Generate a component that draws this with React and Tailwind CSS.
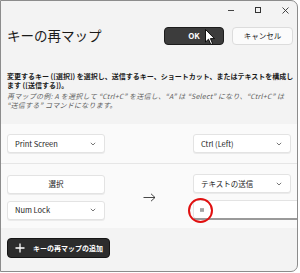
import React from "react";

const F = "font-['Noto_Sans_CJK_JP','Noto_Sans',sans-serif]";

function Chevron() {
  return (
    <svg width="6" height="4" viewBox="0 0 6 4" className="shrink-0">
      <path d="M0.8 0.8 L3 3 L5.2 0.8" fill="none" stroke="#555" strokeWidth="0.8" />
    </svg>
  );
}

function Dropdown({ label, className = "" }) {
  return (
    <div
      className={`h-[19px] w-[98px] shrink-0 bg-white border border-[#e3e3e3] rounded-[3px] flex items-center justify-between pl-[7px] pr-[8px] text-[7.5px] text-[#1b1b1b] shadow-[0_1px_0_rgba(0,0,0,0.06)] ${className}`}
    >
      <span className="whitespace-nowrap">{label}</span>
      <Chevron />
    </div>
  );
}

export default function App() {
  return (
    <div className={`w-[300px] h-[273px] bg-white relative ${F}`}>
      <div className="w-[298px] h-[272px] bg-[#f3f3f3] border border-[#8c8c8c] rounded-tr-[7px] rounded-br-[7px] overflow-hidden flex flex-col">
        {/* title bar */}
        <div className="h-[23px] flex justify-end items-start pt-[6px] pr-[8px] gap-[21px]">
          <div className="w-[6px] h-[6px] flex items-center">
            <div className="w-[6px] h-px bg-[#444]" />
          </div>
          <div className="w-[6px] h-[6px] border border-[#333]" />
          <svg width="7" height="7" viewBox="0 0 7 7">
            <path d="M0.5 0.5 L6.5 6.5 M6.5 0.5 L0.5 6.5" stroke="#333" strokeWidth="0.9" />
          </svg>
        </div>
        {/* header */}
        <div className="h-[23px] flex items-center pl-[6px] pr-[4px]">
          <div className="text-[13.5px] leading-none text-[#1a1a1a] whitespace-nowrap">キーの再マップ</div>
          <div className="ml-auto flex gap-[8px]">
            <div className="w-[60px] h-[18px] rounded-[4px] bg-[#3c3c3c] border border-[#1c1c1c] flex items-center justify-center text-white text-[8px] font-bold">
              OK
            </div>
            <div className="w-[61px] h-[18px] rounded-[4px] bg-[#fbfbfb] border border-[#dcdcdc] flex items-center justify-center text-[#1a1a1a] text-[7.5px]">
              キャンセル
            </div>
          </div>
        </div>
        {/* description */}
        <div className="mt-[25px] pl-[6px] text-[7px] leading-[9px]">
          <div className="font-semibold text-[#1a1a1a] whitespace-nowrap">
            変更するキー ([選択]) を選択し、送信するキー、ショートカット、またはテキストを構成し
            <br />
            ます ([送信する])。
          </div>
          <div className="mt-[2px] italic text-[#5c5c5c] whitespace-nowrap tracking-[0.25px]">
            再マップの例: A を選択して “Ctrl+C” を送信し、“A” は “Select” になり、“Ctrl+C” は
            <br />
            “送信する” コマンドになります。
          </div>
        </div>
        {/* list */}
        <div className="mt-[14px] bg-[#fafafa] flex flex-col">
          <div className="flex items-start pt-[10px] pb-[10px] pl-[6px]">
            <Dropdown label="Print Screen" />
            <div className="w-[88px] shrink-0" />
            <Dropdown label="Ctrl (Left)" />
            <div className="ml-[8px] h-[19px] w-[98px] shrink-0 bg-white border border-[#e3e3e3] rounded-[3px]" />
          </div>
          <div className="h-px bg-[#e6e6e6]" />
          <div className="flex items-center pt-[10px] pb-[8px] pl-[6px]">
            <div className="flex flex-col gap-[7px] w-[98px] shrink-0">
              <div className="h-[19px] w-[98px] bg-white border border-[#e3e3e3] rounded-[3px] flex items-center justify-center text-[7.5px] text-[#1b1b1b] shadow-[0_1px_0_rgba(0,0,0,0.06)]">
                選択
              </div>
              <Dropdown label="Num Lock" />
            </div>
            <div className="w-[88px] shrink-0 flex justify-center">
              <svg width="13" height="9" viewBox="0 0 13 9">
                <path d="M0.5 4.5 H12 M8 0.8 L12 4.5 L8 8.2" fill="none" stroke="#333" strokeWidth="0.9" />
              </svg>
            </div>
            <div className="flex flex-col gap-[7px] shrink-0">
              <Dropdown label="テキストの送信" />
              <div className="h-[20px] w-[200px] bg-white border border-[#e3e3e3] border-b-2 border-b-[#9a9a9a] rounded-[3px] flex items-center pl-[6px]">
                <svg width="4" height="4" viewBox="0 0 4 4">
                  <rect x="0" y="0" width="4" height="4" fill="#b5b5b5" />
                  <path d="M0 1.3 H4 M0 2.7 H4" stroke="#888" strokeWidth="0.5" />
                </svg>
              </div>
            </div>
          </div>
        </div>
        {/* add button */}
        <div className="mt-[10px] ml-[6px] w-[103px] h-[20px] rounded-[4px] bg-[#2c2c2c] border border-[#151515] flex items-center pl-[7px] gap-[8px]">
          <svg width="10" height="10" viewBox="0 0 10 10">
            <path d="M5 0.5 V9.5 M0.5 5 H9.5" stroke="white" strokeWidth="1.3" />
          </svg>
          <span className="text-white text-[7px] font-bold whitespace-nowrap">キーの再マップの追加</span>
        </div>
      </div>
      {/* red annotation circle */}
      <div className="absolute left-[188px] top-[198px] w-[25px] h-[25px] rounded-full border-2 border-[#e01010]" />
      {/* mouse cursor */}
      <svg className="absolute left-[205px] top-[29px]" width="11" height="17" viewBox="0 0 11 17">
        <path d="M0.5 0.5 L0.5 13 L3.5 10.2 L5.8 15.5 L7.6 14.7 L5.4 9.6 L9.5 9.6 Z" fill="white" stroke="black" strokeWidth="0.9" strokeLinejoin="round" />
      </svg>
    </div>
  );
}
